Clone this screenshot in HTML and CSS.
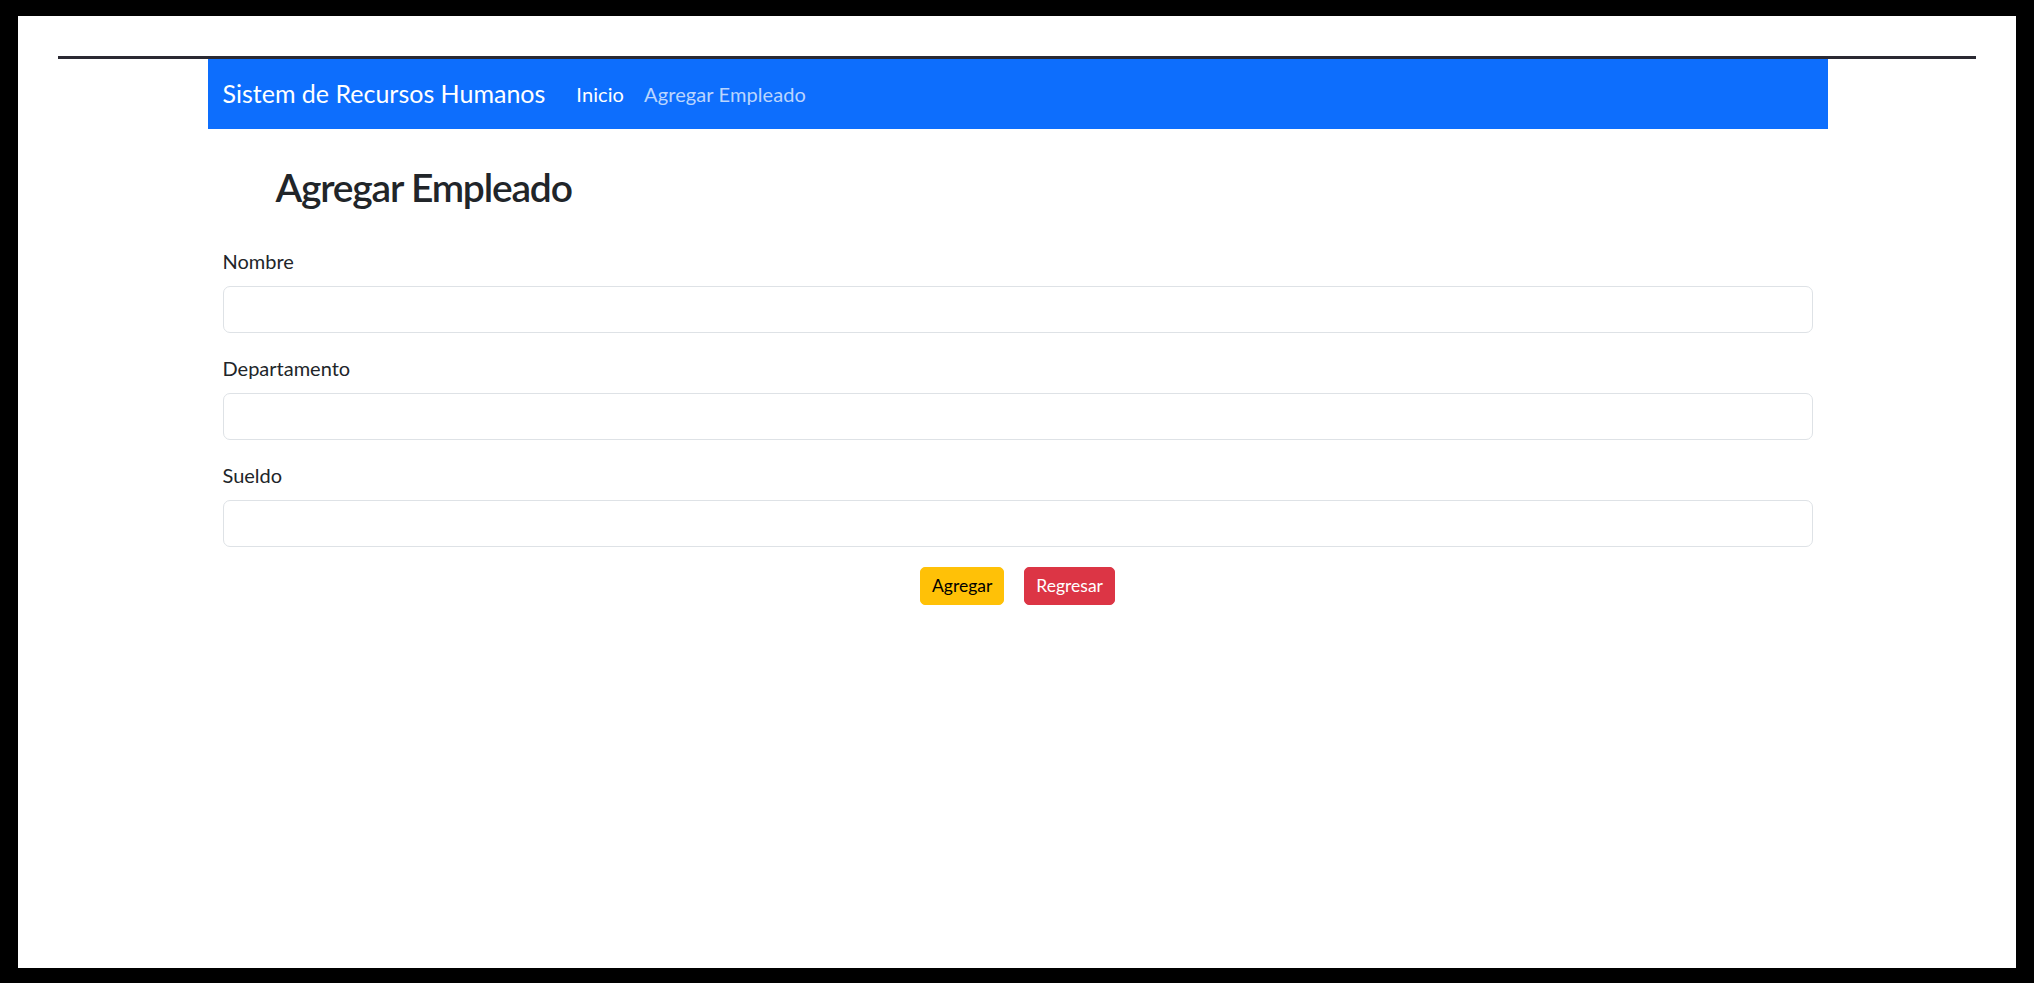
FILE: index.html
```html
<!DOCTYPE html>
<html lang="es">
<head>
<meta charset="utf-8">
<title>Agregar Empleado</title>
<link rel="stylesheet" href="styles.css">
</head>
<body>
<div class="page">
  <div class="rule"></div>
  <div class="container">
    <nav class="navbar">
      <a class="brand" href="#">Sistem de Recursos Humanos</a>
      <ul class="nav">
        <li><a class="nav-link active" href="#">Inicio</a></li>
        <li><a class="nav-link" href="#">Agregar Empleado</a></li>
      </ul>
    </nav>
    <div class="content">
      <h2 class="title">Agregar Empleado</h2>
      <form class="form">
        <div class="group">
          <label class="label" for="nombre">Nombre</label>
          <input class="control" id="nombre" type="text">
        </div>
        <div class="group">
          <label class="label" for="departamento">Departamento</label>
          <input class="control" id="departamento" type="text">
        </div>
        <div class="group">
          <label class="label" for="sueldo">Sueldo</label>
          <input class="control" id="sueldo" type="number">
        </div>
        <div class="actions">
          <button type="submit" class="btn btn-warning">Agregar</button>
          <button type="button" class="btn btn-danger">Regresar</button>
        </div>
      </form>
    </div>
  </div>
</div>
</body>
</html>
```
FILE: styles.css
```css
* { box-sizing: border-box; }

html, body {
  margin: 0;
  height: 100%;
}

body {
  background: #000;
  padding: 16px 18px 15px 18px;
  font-family: "Lato", "Liberation Sans", sans-serif;
  font-size: 20px;
  line-height: 1.5;
  color: #212529;
  overflow: hidden;
}

.page {
  background: #fff;
  height: 952px;
  padding-top: 40px;
  padding-left: 1px;
}

.rule {
  margin: 0 40px 0 39px;
  border-top: 3px solid #2a2932;
}

.container {
  width: 1650px;
  margin: 0 auto;
  padding: 0 15px;
}

.navbar {
  display: flex;
  align-items: center;
  height: 70px;
  padding: 0 15px;
  background: #0d6efd;
}

.brand {
  font-size: 25px;
  line-height: 37.5px;
  color: #fff;
  text-decoration: none;
  margin-right: 21px;
  white-space: nowrap;
}

.nav {
  display: flex;
  list-style: none;
  margin: 0;
  padding: 0;
}

.nav-link {
  display: block;
  padding: 10px;
  font-size: 20px;
  line-height: 30px;
  letter-spacing: 0.1px;
  color: rgba(255, 255, 255, 0.72);
  text-decoration: none;
  white-space: nowrap;
}

.nav-link.active {
  color: #fff;
}

.content {
  padding: 0 15px;
}

.title {
  margin: 35px 0 35px 53px;
  font-size: 39px;
  line-height: 47px;
  font-weight: 600;
  letter-spacing: -1.2px;
  color: #212529;
}

.form {
  margin: 0;
}

.group {
  margin-bottom: 20px;
}

.label {
  display: block;
  margin-bottom: 10px;
  font-size: 20px;
  line-height: 30px;
}

.control {
  display: block;
  width: 100%;
  height: 47px;
  padding: 7px 15px;
  font: inherit;
  color: #212529;
  background: #fff;
  border: 1px solid #dee2e6;
  border-radius: 7px;
  outline: none;
}

.actions {
  display: flex;
  justify-content: center;
  gap: 20px;
}

.btn {
  height: 38px;
  padding: 0 11px;
  font-family: inherit;
  font-size: 17.5px;
  line-height: 36px;
  border: 1px solid transparent;
  border-radius: 5px;
  cursor: pointer;
}

.btn-warning {
  background: #ffc107;
  border-color: #ffc107;
  color: #000;
}

.btn-danger {
  background: #dc3545;
  border-color: #dc3545;
  color: #fff;
}
```
